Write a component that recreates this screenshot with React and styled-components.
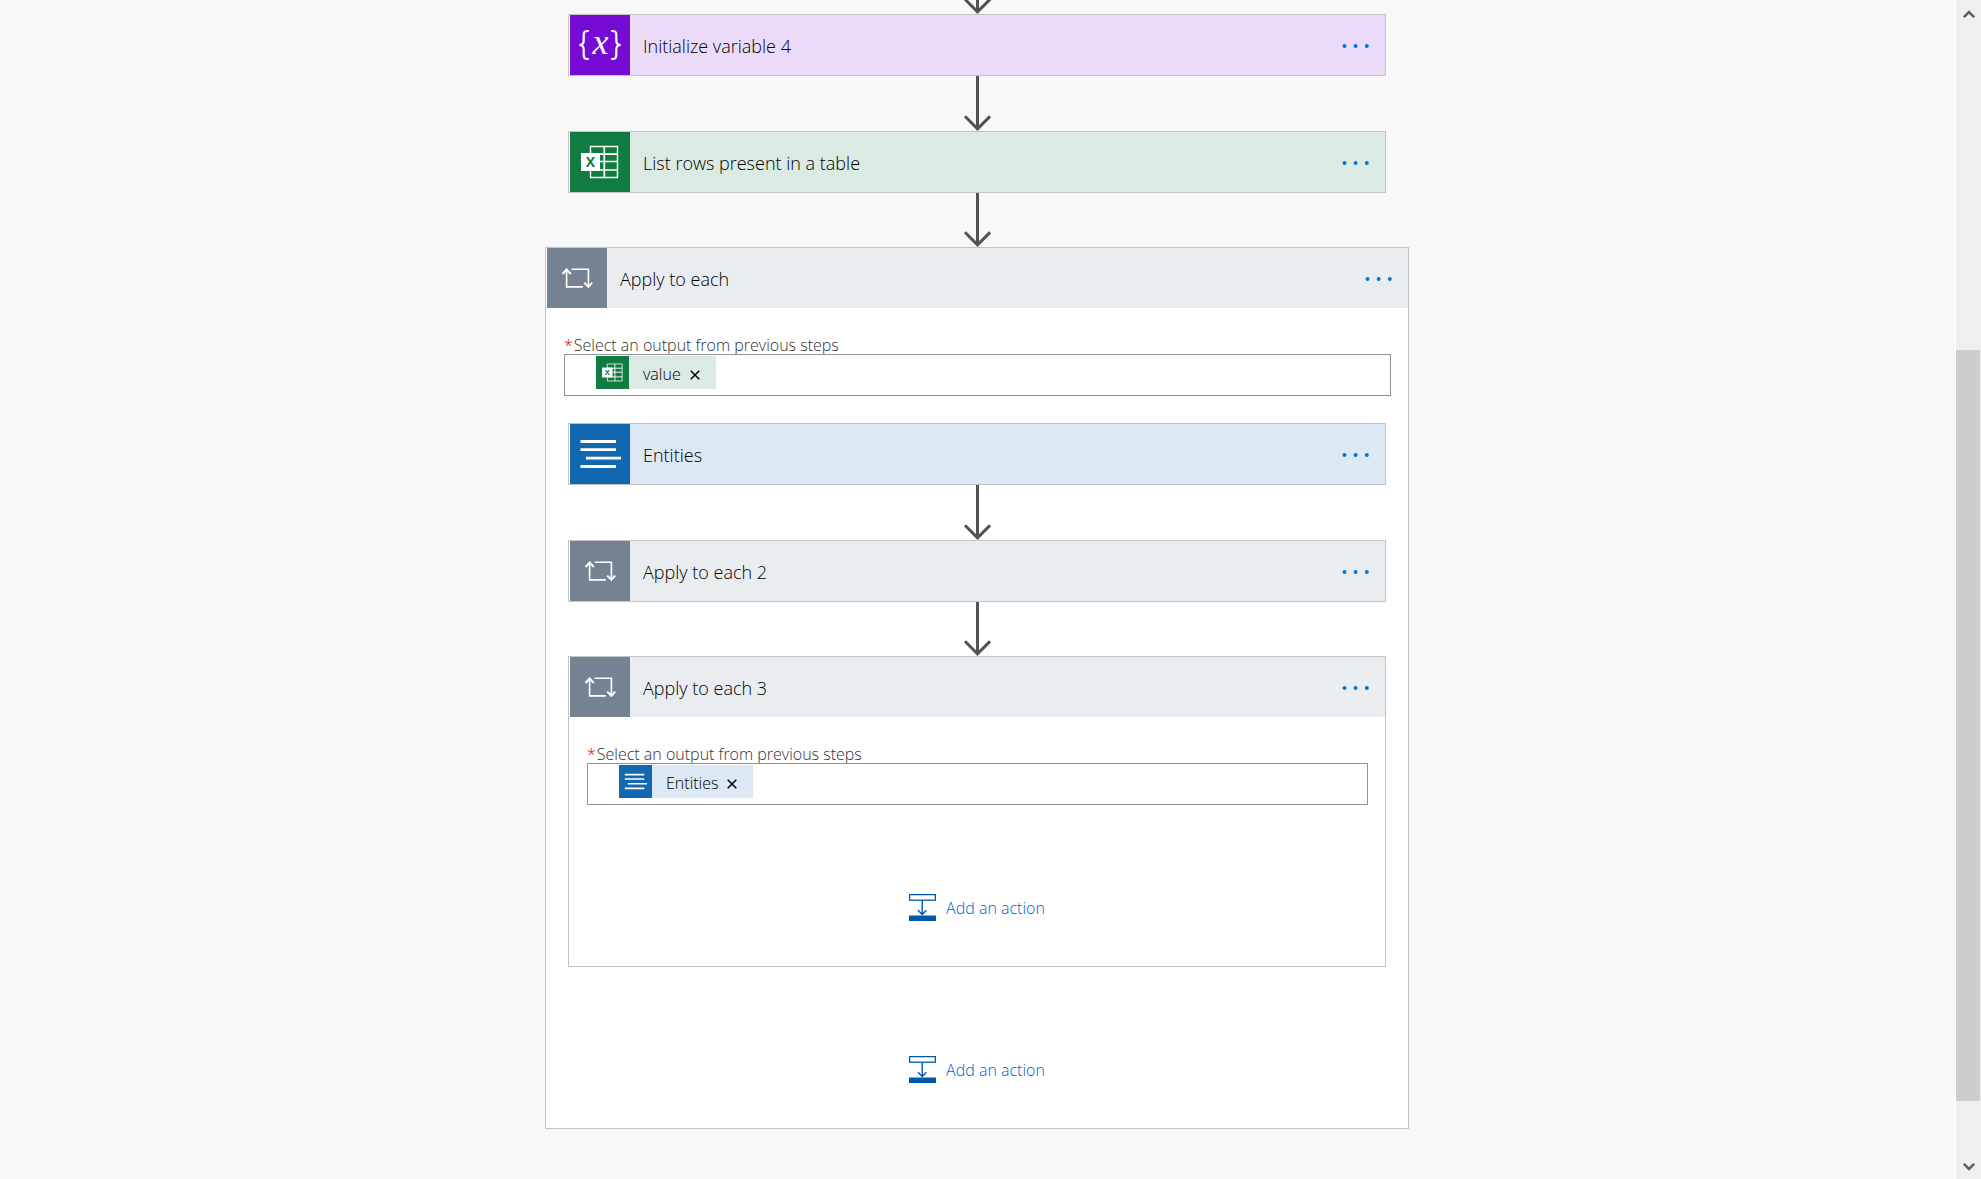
import React from "react";
import styled, { createGlobalStyle } from "styled-components";

const GlobalStyle = createGlobalStyle`
  *, *::before, *::after { box-sizing: border-box; }
  body {
    margin: 0;
    background: #f8f8f8;
    color: #000;
    font-family: "Open Sans", "Noto Sans", sans-serif;
    font-size: 16px;
    font-weight: 300;
  }
  button, input { font: inherit; color: inherit; }
`;

const tones = {
  variable: { solid: "#770bd6", pale: "#ebdbf8" },
  excel: { solid: "#107c41", pale: "#dbeae2" },
  control: { solid: "#748292", pale: "#e9edf0" },
  data: { solid: "#1267b1", pale: "#dce8f4" },
};

const Page = styled.div`
  display: flex;
  min-height: 100vh;
`;

const Canvas = styled.main`
  flex: 1;
  display: flex;
  flex-direction: column;
  align-items: center;
  padding: 0 24px 50px;
`;

const Flow = styled.div`
  width: 100%;
  max-width: 864px;
  display: flex;
  flex-direction: column;
`;

const Steps = styled.div`
  display: flex;
  flex-direction: column;
  padding: 0 23px;
`;

const Connector = styled.div`
  height: ${(p) => p.$height}px;
  display: flex;
  align-items: flex-end;
  justify-content: center;
  overflow: hidden;

  svg { flex: none; display: block; }
`;

const Card = styled.section`
  border: 1px solid #c4c4c4;
  background: #fff;
`;

const CardHeader = styled.header`
  display: flex;
  align-items: center;
  height: 60px;
  padding-left: 1px;
  background: linear-gradient(to right, #fff 1px, ${(p) => tones[p.$tone].pale} 1px);
`;

const Tile = styled.span`
  flex: none;
  display: block;
  width: ${(p) => p.$size}px;
  height: ${(p) => p.$size}px;
  background: ${(p) => tones[p.$tone].solid};

  svg { display: block; width: 100%; height: 100%; }
`;

const Title = styled.h2`
  flex: 1;
  margin: 0;
  padding: 2px 0 0 13px;
  font-size: 18px;
  font-weight: 300;
  line-height: 26px;
`;

const MoreButton = styled.button`
  display: flex;
  align-items: center;
  justify-content: center;
  width: 43px;
  height: 42px;
  margin-right: 8px;
  padding: 2px 0 0;
  border: 0;
  background: none;
  color: #0078d7;
  cursor: pointer;

  svg { display: block; }
`;

const Field = styled.div`
  display: flex;
  flex-direction: column;
  padding: 28px 17px 0 18px;
`;

const FieldLabel = styled.label`
  display: flex;
  gap: 1px;
  line-height: 18px;
  color: #303030;
`;

const Required = styled.span`
  color: #e00010;
`;

const FieldBox = styled.div`
  display: flex;
  align-items: flex-start;
  height: 42px;
  padding: 1px 8px 1px 31px;
  border: 1px solid #939393;
  background: #fff;
`;

const FieldInput = styled.input`
  flex: 1;
  min-width: 0;
  height: 38px;
  padding: 0 4px;
  border: 0;
  outline: 0;
  background: none;
`;

const Token = styled.span`
  display: flex;
  align-items: center;
  height: 33px;
  padding-right: 15px;
  background: ${(p) => tones[p.$tone].pale};
`;

const TokenText = styled.span`
  padding: 3px 8px 0 14px;
  line-height: 22px;
`;

const RemoveButton = styled.button`
  display: flex;
  padding: 5px 1px 0;
  border: 0;
  background: none;
  cursor: pointer;

  svg { display: block; }
`;

const Nested = styled.div`
  display: flex;
  flex-direction: column;
  padding: 27px 22px 0;
`;

const AddRow = styled.div`
  display: flex;
  justify-content: center;
  padding: 89px 0 45px;
`;

const AddButton = styled.button`
  display: flex;
  align-items: center;
  gap: 10px;
  height: 27px;
  padding: 0;
  border: 0;
  background: none;
  color: #0062cc;
  cursor: pointer;

  svg { display: block; }
`;

const AddText = styled.span`
  line-height: 22px;
`;

const ScrollRail = styled.aside`
  flex: none;
  display: flex;
  flex-direction: column;
  width: 26px;
  height: 100vh;
  margin-left: 1px;
  border-left: 1px solid #fff;
  background: #efefef;
`;

const ScrollButton = styled.button`
  display: flex;
  justify-content: center;
  align-items: center;
  height: ${(p) => p.$height}px;
  padding: 0;
  border: 0;
  background: none;

  svg { display: block; }
`;

const ScrollGap = styled.div`
  flex: ${(p) => p.$share} 1 0;
`;

const ScrollThumb = styled.div`
  flex: 751 1 0;
  margin-right: 1px;
  background: #cdcdcd;
`;

function VariableIcon() {
  return (
    <svg viewBox="0 0 60 60" fill="none" stroke="#fff" strokeWidth="2.2" aria-hidden="true">
      <path d="M18.800 16h-1.500q-3.600 0-3.600 3.800v5.700q0 4.500-4.400 4.500q4.400 0 4.400 4.500v5.700q0 3.800 3.600 3.800h1.500" />
      <path d="M41.200 16h1.500q3.600 0 3.600 3.800v5.700q0 4.500 4.400 4.500q-4.400 0-4.400 4.500v5.700q0 3.800-3.600 3.800h-1.500" />
      <text x="30.500" y="39" textAnchor="middle" fill="#fff" stroke="none" fontFamily="Liberation Serif, serif" fontStyle="italic" fontWeight="400" fontSize="36">x</text>
    </svg>
  );
}

function ExcelIcon() {
  return (
    <svg viewBox="0 0 60 60" fill="none" stroke="#fff" aria-hidden="true">
      <path d="M20.500 22v-7.500h27v31h-27v-7.500" strokeWidth="1.400" />
      <path d="M34.300 14.500v31M20.500 22.200h27M30 29.500h17.500M20.500 38h27" strokeWidth="1.700" />
      <rect x="11" y="21" width="19" height="18" fill="#fff" stroke="none" />
      <text x="20.500" y="35" textAnchor="middle" fill="#107c41" stroke="none" fontFamily="Open Sans, sans-serif" fontWeight="700" fontSize="14">X</text>
    </svg>
  );
}

function LoopIcon() {
  return (
    <svg viewBox="0 0 60 60" fill="none" stroke="#fff" strokeWidth="1.600" aria-hidden="true">
      <path d="M19.600 21.500v17.400h16.200M24.500 21.200h16.900v17.300" />
      <path d="M15.500 26l4.100-4.500l4.200 4.500M37.200 34.600l4.200 4.200l3.800-4.200" strokeWidth="2" />
    </svg>
  );
}

function DataIcon() {
  return (
    <svg viewBox="0 0 60 60" fill="none" stroke="#fff" strokeWidth="2.800" aria-hidden="true">
      <path d="M10.500 17.500h35.500M10.500 25.600h35.500M16 34.100h35M10.500 42.500h35.500" />
    </svg>
  );
}

function ArrowIcon() {
  return (
    <svg width="28" height="55" viewBox="0 0 28 55" fill="none" stroke="#525252" strokeWidth="3" aria-hidden="true">
      <path d="M14.500 0v53M2 40.300l12.500 12.500l12.500-12.500" />
    </svg>
  );
}

function MoreIcon() {
  return (
    <svg width="27" height="4" viewBox="0 0 27 4" fill="currentColor" aria-hidden="true">
      <circle cx="2.500" cy="2" r="2" />
      <circle cx="13.600" cy="2" r="2" />
      <circle cx="24.800" cy="2" r="2" />
    </svg>
  );
}

function CloseIcon() {
  return (
    <svg width="10" height="10" viewBox="0 0 10 10" fill="none" stroke="#000" strokeWidth="1.500" aria-hidden="true">
      <path d="M.7.7l8.600 8.600M9.300.7l-8.600 8.600" />
    </svg>
  );
}

function InsertIcon() {
  return (
    <svg width="27" height="27" viewBox="0 0 27 27" fill="none" stroke="#0058ad" aria-hidden="true">
      <rect x=".6" y=".6" width="25.800" height="5.600" strokeWidth="1.300" />
      <path d="M13.200 6.500v14M9 16.300l4.200 4.200l4.200-4.200" strokeWidth="1.400" />
      <rect y="21.500" width="27" height="5.500" fill="#0058ad" stroke="none" />
    </svg>
  );
}

function Chevron({ down }) {
  return (
    <svg width="12" height="10" viewBox="0 0 12 10" fill="none" stroke="#606060" strokeWidth="2.600" aria-hidden="true">
      <path d={down ? "M.8 1.800l5.200 5.200l5.200-5.200" : "M.8 8.200l5.200-5.200l5.200 5.200"} />
    </svg>
  );
}

const icons = {
  variable: VariableIcon,
  excel: ExcelIcon,
  control: LoopIcon,
  data: DataIcon,
};

function Arrow({ height = 55 }) {
  return (
    <Connector $height={height}>
      <ArrowIcon />
    </Connector>
  );
}

function Step({ tone, title, children }) {
  const Icon = icons[tone];
  return (
    <Card>
      <CardHeader $tone={tone}>
        <Tile $tone={tone} $size={60}><Icon /></Tile>
        <Title>{title}</Title>
        <MoreButton type="button" aria-label={`More commands for ${title}`}>
          <MoreIcon />
        </MoreButton>
      </CardHeader>
      {children}
    </Card>
  );
}

function OutputField({ id, tone, value }) {
  const Icon = icons[tone];
  return (
    <Field>
      <FieldLabel htmlFor={id}>
        <Required>*</Required>
        Select an output from previous steps
      </FieldLabel>
      <FieldBox>
        <Token $tone={tone}>
          <Tile $tone={tone} $size={33}><Icon /></Tile>
          <TokenText>{value}</TokenText>
          <RemoveButton type="button" aria-label={`Remove ${value}`}>
            <CloseIcon />
          </RemoveButton>
        </Token>
        <FieldInput id={id} type="text" />
      </FieldBox>
    </Field>
  );
}

function AddAction() {
  return (
    <AddRow>
      <AddButton type="button">
        <InsertIcon />
        <AddText>Add an action</AddText>
      </AddButton>
    </AddRow>
  );
}

export default function App() {
  return (
    <>
      <GlobalStyle />
      <Page>
        <Canvas>
          <Flow>
            <Steps>
              <Arrow height={14} />
              <Step tone="variable" title="Initialize variable 4" />
              <Arrow />
              <Step tone="excel" title="List rows present in a table" />
              <Arrow height={54} />
            </Steps>
            <Step tone="control" title="Apply to each">
              <OutputField id="each-output" tone="excel" value="value" />
              <Nested>
                <Step tone="data" title="Entities" />
                <Arrow />
                <Step tone="control" title="Apply to each 2" />
                <Arrow height={54} />
                <Step tone="control" title="Apply to each 3">
                  <OutputField id="each-3-output" tone="data" value="Entities" />
                  <AddAction />
                </Step>
              </Nested>
              <AddAction />
            </Step>
          </Flow>
        </Canvas>
        <ScrollRail>
          <ScrollButton type="button" aria-label="Scroll up" $height={28}><Chevron /></ScrollButton>
          <ScrollGap $share={322} />
          <ScrollThumb />
          <ScrollGap $share={54} />
          <ScrollButton type="button" aria-label="Scroll down" $height={24}><Chevron down /></ScrollButton>
        </ScrollRail>
      </Page>
    </>
  );
}
